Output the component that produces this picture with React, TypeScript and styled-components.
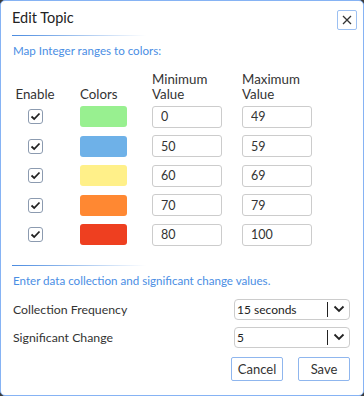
import React from 'react'
import styled, { createGlobalStyle } from 'styled-components'

const GlobalStyle = createGlobalStyle`
  html, body {
    margin: 0;
    padding: 0;
    background: #3a3a3a;
  }
  body {
    font-family: Lato, "Open Sans", sans-serif;
  }
`

const ranges = [
  { color: '#98f090', min: '0', max: '49' },
  { color: '#6eb1e8', min: '50', max: '59' },
  { color: '#fff089', min: '60', max: '69' },
  { color: '#ff8832', min: '70', max: '79' },
  { color: '#ee3f20', min: '80', max: '100' }
]

const Dialog = styled.div`
  box-sizing: border-box;
  width: 364px;
  height: 396px;
  background: #ffffff;
  border: 1px solid #86b3f4;
  border-radius: 5px;
  padding: 0 12px 0 11px;
  display: flex;
  flex-direction: column;
  color: #333333;
`

const Header = styled.div`
  display: flex;
  justify-content: space-between;
  align-items: flex-start;
  padding-top: 7px;
  margin-right: -6px;
`

const Title = styled.h1`
  margin: 0;
  font-size: 14.5px;
  font-weight: 400;
  line-height: 20px;
  color: #222222;
`

const CloseButton = styled.button`
  box-sizing: border-box;
  width: 20px;
  height: 20px;
  margin-top: 2px;
  padding: 0;
  border: 1px solid #9cc0f2;
  border-radius: 2px;
  background: #ffffff;
  display: flex;
  align-items: center;
  justify-content: center;
  cursor: pointer;
`

const Divider = styled.div<{ $top: number }>`
  height: 1px;
  width: 134px;
  margin-top: ${({ $top }) => $top}px;
  background: linear-gradient(to right, #4a8be0, rgba(74, 139, 224, 0));
`

const Hint = styled.p`
  margin: 7px 0 0 1px;
  font-size: 11.6px;
  line-height: 16px;
  color: #4a8ee4;
`

const Table = styled.div`
  display: grid;
  grid-template-columns: 66px 72px 90px 70px;
  row-gap: 7.5px;
  margin-top: 13px;
  margin-left: 2px;
  align-items: center;
`

const HeadCell = styled.div<{ $center?: boolean }>`
  font-size: 13.3px;
  line-height: 15px;
  align-self: end;
  color: #333333;
  margin-bottom: -4px;
  ${({ $center }) => ($center ? 'width: 42px; text-align: center;' : '')}
`

const CheckCell = styled.div`
  width: 42px;
  display: flex;
  justify-content: center;
`

const Check = styled.span`
  box-sizing: border-box;
  width: 15px;
  height: 15px;
  border: 1px solid #8c9bb0;
  border-radius: 3px;
  display: flex;
  align-items: center;
  justify-content: center;
  background: #ffffff;
`

const Swatch = styled.div<{ $color: string }>`
  width: 47px;
  height: 21px;
  border-radius: 3px;
  background: ${({ $color }) => $color};
`

const NumberInput = styled.input`
  box-sizing: border-box;
  width: 70px;
  height: 22px;
  border: 1px solid #cccccc;
  border-radius: 3px;
  padding: 0 8px;
  font-family: Lato, "Open Sans", sans-serif;
  font-size: 12.5px;
  color: #333333;
  outline: none;
`

const FieldRow = styled.div<{ $top: number }>`
  display: flex;
  justify-content: space-between;
  align-items: center;
  margin-top: ${({ $top }) => $top}px;
  margin-left: 1px;
  margin-right: 1px;
`

const FieldLabel = styled.span`
  font-size: 12.3px;
  color: #333333;
`

const Select = styled.div`
  box-sizing: border-box;
  width: 116px;
  height: 21px;
  border: 1px solid #cccccc;
  border-radius: 4px;
  display: flex;
  align-items: center;
  padding-left: 2px;
  font-size: 12px;
  color: #222222;
`

const SelectValue = styled.span`
  flex: 1;
`

const SelectBar = styled.span`
  width: 1px;
  height: 15px;
  background: #222222;
`

const SelectArrow = styled.span`
  width: 21px;
  display: flex;
  justify-content: center;
  align-items: center;
`

const Actions = styled.div`
  display: flex;
  justify-content: flex-end;
  gap: 15px;
  margin-top: 9px;
  margin-right: 1px;
`

const Button = styled.button`
  box-sizing: border-box;
  width: 52px;
  height: 24px;
  border: 1px solid #8fb6ee;
  border-radius: 2px;
  background: #ffffff;
  font-family: Lato, "Open Sans", sans-serif;
  font-size: 13px;
  color: #333333;
  padding: 0;
  cursor: pointer;
`

const CheckMark = () => (
  <svg width='11' height='9' viewBox='0 0 11 9'>
    <path d='M1.5 4.5 L4.2 7 L9.5 1.5' fill='none' stroke='#222' strokeWidth='1.8' />
  </svg>
)

const Chevron = () => (
  <svg width='12' height='8' viewBox='0 0 12 8'>
    <path d='M1.5 1.5 L6 6 L10.5 1.5' fill='none' stroke='#222' strokeWidth='1.8' />
  </svg>
)

export default function App () {
  return (
    <>
      <GlobalStyle />
      <Dialog>
        <Header>
          <Title>Edit Topic</Title>
          <CloseButton aria-label='Close'>
            <svg width='10' height='10' viewBox='0 0 10 10'>
              <path d='M1 1 L9 9 M9 1 L1 9' stroke='#333' strokeWidth='1.3' />
            </svg>
          </CloseButton>
        </Header>
        <Divider $top={5} />
        <Hint>Map Integer ranges to colors:</Hint>
        <Table>
          <HeadCell $center>Enable</HeadCell>
          <HeadCell>Colors</HeadCell>
          <HeadCell>Minimum<br />Value</HeadCell>
          <HeadCell>Maximum<br />Value</HeadCell>
          {ranges.map((r, i) => (
            <React.Fragment key={i}>
              <CheckCell><Check><CheckMark /></Check></CheckCell>
              <Swatch $color={r.color} />
              <NumberInput defaultValue={r.min} />
              <NumberInput defaultValue={r.max} />
            </React.Fragment>
          ))}
        </Table>
        <Divider $top={19} />
        <Hint>Enter data collection and significant change values.</Hint>
        <FieldRow $top={10}>
          <FieldLabel>Collection Frequency</FieldLabel>
          <Select>
            <SelectValue>15 seconds</SelectValue>
            <SelectBar />
            <SelectArrow><Chevron /></SelectArrow>
          </Select>
        </FieldRow>
        <FieldRow $top={7}>
          <FieldLabel>Significant Change</FieldLabel>
          <Select>
            <SelectValue>5</SelectValue>
            <SelectBar />
            <SelectArrow><Chevron /></SelectArrow>
          </Select>
        </FieldRow>
        <Actions>
          <Button>Cancel</Button>
          <Button>Save</Button>
        </Actions>
      </Dialog>
    </>
  )
}
